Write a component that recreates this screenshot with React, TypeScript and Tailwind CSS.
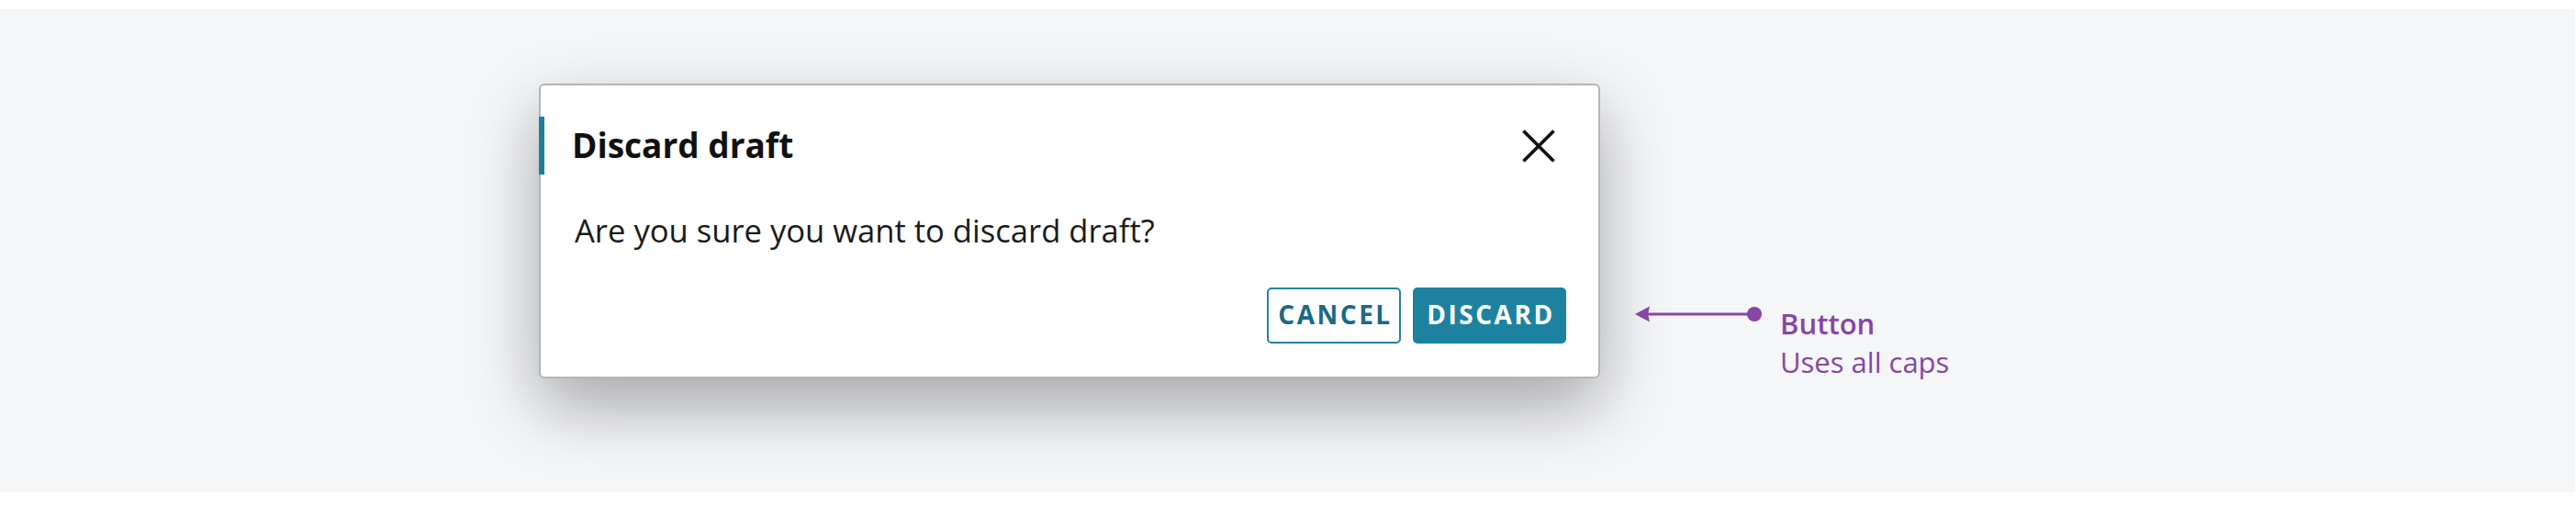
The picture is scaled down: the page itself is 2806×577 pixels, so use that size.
const FONT = "font-['Open_Sans',sans-serif]";

function CloseIcon() {
  return (
    <svg width="36" height="36" viewBox="0 0 36 36" fill="none" aria-hidden="true">
      <path d="M1.5 1.5L34.5 34.5M34.5 1.5L1.5 34.5" stroke="#111111" strokeWidth="3.8" />
    </svg>
  );
}

function Callout() {
  return (
    <div className="ml-[38px] mt-[240px] flex items-start">
      <svg width="138" height="18" viewBox="0 0 138 18" className="mt-[2px]" aria-hidden="true">
        <line x1="12" y1="9" x2="130" y2="9" stroke="#8746a5" strokeWidth="3" />
        <polygon points="0,9 16,0.5 14,9 16,17.5" fill="#8746a5" />
        <circle cx="130" cy="9" r="8" fill="#8746a5" />
      </svg>
      <div className={`ml-[20px] text-[31px] leading-[42px] text-[#8746a5] ${FONT}`}>
        <div className="font-semibold">Button</div>
        <div>Uses all caps</div>
      </div>
    </div>
  );
}

export default function App() {
  return (
    <div className={`w-[2806px] h-[577px] bg-white ${FONT}`}>
      <div className="mt-[10px] h-[526px] w-[2805px] bg-[#f5f6f8] flex items-start pl-[587px] pt-[81px]">
        <div className="w-[1156px] flex flex-col bg-white border-2 border-[#b4b5b7] rounded-[6px] shadow-[0_30px_75px_rgba(0,0,0,0.33)]">
          <div className="mt-[34px] -ml-[2px] h-[63px] flex items-center justify-between border-l-[6px] border-[#1d7f9c] pl-[30px] pr-[47px]">
            <h2 className="text-[37px] font-bold text-[#111111] leading-[52px] pb-[2px]">Discard draft</h2>
            <button type="button" aria-label="Close" className="flex items-center justify-center">
              <CloseIcon />
            </button>
          </div>

          <p className="mt-[37px] pl-[37px] text-[34.6px] leading-[47px] text-[#1a1a1a]">
            Are you sure you want to discard draft?
          </p>

          <div className="mt-[39px] mb-[36px] pr-[35px] flex justify-end gap-[13px]">
            <button
              type="button"
              className="w-[146px] h-[61px] flex items-center justify-center pb-[3px] pl-[3px] rounded-[5px] border-2 border-[#2584a1] text-[#1a6a84] text-[28px] font-bold tracking-[0.09em]"
            >
              CANCEL
            </button>
            <button
              type="button"
              className="w-[167px] h-[61px] flex items-center justify-center pb-[3px] pl-[3px] rounded-[5px] bg-[#1d82a0] text-white text-[28px] font-bold tracking-[0.09em]"
            >
              DISCARD
            </button>
          </div>
        </div>

        <Callout />
      </div>
    </div>
  );
}
